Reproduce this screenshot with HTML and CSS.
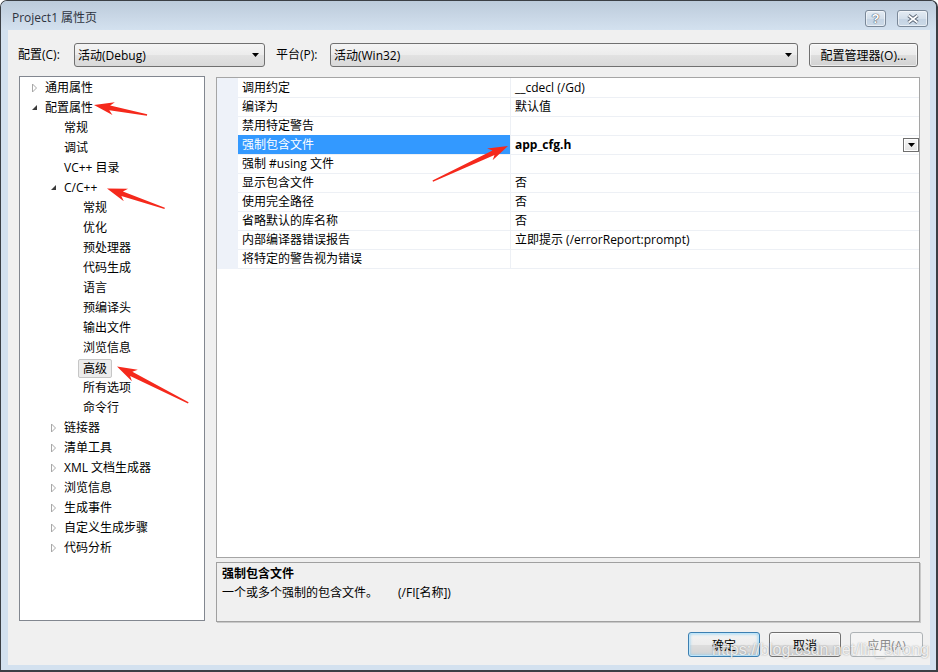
FILE: index.html
```
<!DOCTYPE html>
<html lang="zh-CN">
<head>
<meta charset="utf-8">
<title>Project1 属性页</title>
<link rel="stylesheet" href="styles.css">
</head>
<body>
<div class="window">
  <div class="titlebar">
    <span class="title">Project1 属性页</span>
    <div class="caption-btns">
      <div class="cbtn help"><span>?</span></div>
      <div class="cbtn close">
        <svg width="12" height="10" viewBox="0 0 12 10"><path d="M1.5 1.5 L10.5 8.5 M10.5 1.5 L1.5 8.5" stroke="#5d6979" stroke-width="3.6" fill="none"/><path d="M1.5 1.5 L10.5 8.5 M10.5 1.5 L1.5 8.5" stroke="#ffffff" stroke-width="1.6" fill="none"/></svg>
      </div>
    </div>
  </div>
  <div class="client">
    <div class="config-row">
      <span class="lbl l1">配置(C):</span>
      <div class="combo c1"><span>活动(Debug)</span><svg class="carrow" width="7" height="4" viewBox="0 0 7 4"><path d="M0 0 H7 L3.5 4 Z" fill="#000"/></svg></div>
      <span class="lbl l2">平台(P):</span>
      <div class="combo c2"><span>活动(Win32)</span><svg class="carrow" width="7" height="4" viewBox="0 0 7 4"><path d="M0 0 H7 L3.5 4 Z" fill="#000"/></svg></div>
      <div class="btn mgr">配置管理器(O)...</div>
    </div>
    <div class="main">
      <div class="tree">
        <div class="ti l0"><span class="exp"><svg width="14" height="20"><path d="M1.5 6 L5.5 10 L1.5 14 Z" fill="none" stroke="#a8a8a8"/></svg></span><span>通用属性</span></div>
        <div class="ti l0"><span class="exp"><svg width="14" height="20"><path d="M6 7 L6 12 L1 12 Z" fill="#3a3a3a"/></svg></span><span>配置属性</span></div>
        <div class="ti l1"><span class="exp"></span><span>常规</span></div>
        <div class="ti l1"><span class="exp"></span><span>调试</span></div>
        <div class="ti l1"><span class="exp"></span><span>VC++ 目录</span></div>
        <div class="ti l1"><span class="exp"><svg width="14" height="20"><path d="M6 7 L6 12 L1 12 Z" fill="#3a3a3a"/></svg></span><span>C/C++</span></div>
        <div class="ti l2"><span class="exp"></span><span>常规</span></div>
        <div class="ti l2"><span class="exp"></span><span>优化</span></div>
        <div class="ti l2"><span class="exp"></span><span>预处理器</span></div>
        <div class="ti l2"><span class="exp"></span><span>代码生成</span></div>
        <div class="ti l2"><span class="exp"></span><span>语言</span></div>
        <div class="ti l2"><span class="exp"></span><span>预编译头</span></div>
        <div class="ti l2"><span class="exp"></span><span>输出文件</span></div>
        <div class="ti l2"><span class="exp"></span><span>浏览信息</span></div>
        <div class="ti l2"><span class="exp"></span><span class="sel">高级</span></div>
        <div class="ti l2"><span class="exp"></span><span>所有选项</span></div>
        <div class="ti l2"><span class="exp"></span><span>命令行</span></div>
        <div class="ti l1"><span class="exp"><svg width="14" height="20"><path d="M1.5 6 L5.5 10 L1.5 14 Z" fill="none" stroke="#a8a8a8"/></svg></span><span>链接器</span></div>
        <div class="ti l1"><span class="exp"><svg width="14" height="20"><path d="M1.5 6 L5.5 10 L1.5 14 Z" fill="none" stroke="#a8a8a8"/></svg></span><span>清单工具</span></div>
        <div class="ti l1"><span class="exp"><svg width="14" height="20"><path d="M1.5 6 L5.5 10 L1.5 14 Z" fill="none" stroke="#a8a8a8"/></svg></span><span>XML 文档生成器</span></div>
        <div class="ti l1"><span class="exp"><svg width="14" height="20"><path d="M1.5 6 L5.5 10 L1.5 14 Z" fill="none" stroke="#a8a8a8"/></svg></span><span>浏览信息</span></div>
        <div class="ti l1"><span class="exp"><svg width="14" height="20"><path d="M1.5 6 L5.5 10 L1.5 14 Z" fill="none" stroke="#a8a8a8"/></svg></span><span>生成事件</span></div>
        <div class="ti l1"><span class="exp"><svg width="14" height="20"><path d="M1.5 6 L5.5 10 L1.5 14 Z" fill="none" stroke="#a8a8a8"/></svg></span><span>自定义生成步骤</span></div>
        <div class="ti l1"><span class="exp"><svg width="14" height="20"><path d="M1.5 6 L5.5 10 L1.5 14 Z" fill="none" stroke="#a8a8a8"/></svg></span><span>代码分析</span></div>
      </div>
      <div class="right">
        <div class="grid">
          <div class="row"><div class="strip"></div><div class="name">调用约定</div><div class="val">__cdecl (/Gd)</div></div>
          <div class="row"><div class="strip"></div><div class="name">编译为</div><div class="val">默认值</div></div>
          <div class="row"><div class="strip"></div><div class="name">禁用特定警告</div><div class="val"></div></div>
          <div class="row selected"><div class="strip"></div><div class="name">强制包含文件</div><div class="val"><b>app_cfg.h</b><span class="ddbtn"><svg width="7" height="4" viewBox="0 0 7 4"><path d="M0 0 H7 L3.5 4 Z" fill="#000"/></svg></span></div></div>
          <div class="row"><div class="strip"></div><div class="name">强制 #using 文件</div><div class="val"></div></div>
          <div class="row"><div class="strip"></div><div class="name">显示包含文件</div><div class="val">否</div></div>
          <div class="row"><div class="strip"></div><div class="name">使用完全路径</div><div class="val">否</div></div>
          <div class="row"><div class="strip"></div><div class="name">省略默认的库名称</div><div class="val">否</div></div>
          <div class="row"><div class="strip"></div><div class="name">内部编译器错误报告</div><div class="val">立即提示 (/errorReport:prompt)</div></div>
          <div class="row"><div class="strip"></div><div class="name">将特定的警告视为错误</div><div class="val"></div></div>
        </div>
        <div class="desc">
          <div class="desc-title">强制包含文件</div>
          <div class="desc-text">一个或多个强制的包含文件。<span class="opt">(/FI[名称])</span></div>
        </div>
      </div>
    </div>
    <div class="buttons">
      <div class="btn ok">确定</div>
      <div class="btn cancel">取消</div>
      <div class="btn apply disabled">应用(A)</div>
    </div>
  </div>
  <svg class="arrows" width="938" height="672" viewBox="0 0 938 672">
    <g fill="#f5291c">
      <polygon transform="translate(94 105) rotate(10.7)" points="0,0 20,-6.5 16,-2.4 54,-0.7 54,0.7 16,2.4 20,6.5"/>
      <polygon transform="translate(107 188.5) rotate(19)" points="0,0 20,-6.5 16,-2.4 61,-0.7 61,0.7 16,2.4 20,6.5"/>
      <polygon transform="translate(117 366.5) rotate(27)" points="0,0 20,-6.5 16,-2.4 80,-0.7 80,0.7 16,2.4 20,6.5"/>
      <polygon transform="translate(508 146) rotate(155)" points="0,0 20,-6.5 16,-2.4 83,-0.7 83,0.7 16,2.4 20,6.5"/>
    </g>
  </svg>
  <div class="watermark">https://blog.csdn.net/lin_strong</div>
</div>
</body>
</html>
```
FILE: styles.css
```
* { box-sizing: border-box; }
html, body { margin: 0; padding: 0; }
body {
  width: 938px;
  height: 672px;
  overflow: hidden;
  background: #ffffff;
  font-family: "Open Sans", "Noto Sans CJK SC", sans-serif;
  font-size: 12px;
  color: #000;
}

.window {
  position: relative;
  width: 938px;
  height: 672px;
  display: flex;
  flex-direction: column;
  background: #d3e1ef;
  border: 1px solid #3b3f45;
  border-right-width: 2px;
  border-bottom-width: 2px;
  border-radius: 7px 7px 0 0;
  overflow: hidden;
}

.titlebar {
  flex: none;
  height: 29px;
  display: flex;
  align-items: flex-start;
  padding-left: 11px;
  background: linear-gradient(#bccbdb, #c9d7e6 55%, #d3e1ef);
}
.title {
  margin-top: 9px;
  line-height: 16px;
  font-size: 12px;
  color: #2e3440;
}
.caption-btns {
  margin-left: auto;
  margin-right: 8px;
  margin-top: 9px;
  display: flex;
  gap: 11px;
}
.cbtn {
  height: 17px;
  border: 1px solid #7a8898;
  border-radius: 3px;
  background: linear-gradient(#e4ecf4, #d3dfeb 50%, #c4d3e3 51%, #ccdae8);
  box-shadow: inset 0 0 0 1px rgba(255,255,255,0.55);
  display: flex;
  align-items: center;
  justify-content: center;
}
.cbtn.help { width: 21px; }
.cbtn.close { width: 31px; }
.cbtn.help span {
  font-family: "Liberation Sans", sans-serif;
  font-weight: bold;
  font-size: 13px;
  line-height: 15px;
  color: #ffffff;
  text-shadow: 0 0 1px #4f5b6a, 0 0 1px #4f5b6a, 0 0 1px #4f5b6a;
}

.client {
  flex: 1;
  margin: 0 6px 5px 7px;
  background: #f0f0f0;
  display: flex;
  flex-direction: column;
}

.config-row {
  margin-top: 13px;
  height: 24px;
  display: flex;
  align-items: center;
  padding-left: 10px;
}
.lbl { line-height: 24px; }
.lbl.l1 { width: 56px; }
.lbl.l2 { width: 54px; margin-left: 11px; }
.combo {
  height: 24px;
  border: 1px solid #707070;
  border-radius: 3px;
  background: linear-gradient(#f4f4f4, #ececec 50%, #e2e2e2 51%, #d9d9d9);
  display: flex;
  align-items: center;
  justify-content: space-between;
  padding: 0 5px 0 3px;
}
.combo.c1 { width: 191px; }
.combo.c2 { width: 468px; }
.carrow { display: block; }

.btn {
  height: 25px;
  border: 1px solid #707070;
  border-radius: 3px;
  background: linear-gradient(#f4f4f4, #ececec 50%, #dedede 51%, #d2d2d2);
  box-shadow: inset 0 0 0 1px rgba(255,255,255,0.6);
  display: flex;
  align-items: center;
  justify-content: center;
}
.btn.mgr { width: 109px; height: 24px; margin-left: 11px; }

.main {
  margin-top: 9px;
  height: 546px;
  display: flex;
  gap: 11px;
  padding-left: 11px;
}
.tree {
  width: 186px;
  height: 545px;
  background: #fff;
  border: 1px solid #828790;
  padding-top: 1px;
}
.ti {
  height: 20px;
  line-height: 20px;
  display: flex;
  align-items: center;
  white-space: nowrap;
}
.ti.l0 { padding-left: 11px; }
.ti.l1 { padding-left: 30px; }
.ti.l2 { padding-left: 49px; }
.exp { width: 14px; height: 20px; flex: none; display: block; }
.exp svg { display: block; }
.sel {
  margin-left: -5px;
  padding: 0 4px;
  height: 19px;
  line-height: 17px;
  border: 1px solid #c6c6c6;
  border-radius: 2px;
  background: #ececec;
}

.right {
  width: 704px;
  display: flex;
  flex-direction: column;
  gap: 4px;
  padding-top: 1px;
}
.grid {
  height: 481px;
  background: #fff;
  border: 1px solid #a5a5a5;
}
.row {
  display: grid;
  grid-template-columns: 21px 273px 1fr;
  height: 19px;
}
.strip { background: #eef2f9; }
.name, .val {
  border-bottom: 1px solid #edf0f5;
  line-height: 18px;
  padding-top: 1px;
  padding-left: 4px;
  white-space: nowrap;
}
.name { border-right: 1px solid #edf0f5; }
.val { display: flex; }
.row.selected .name { background: #3399ff; color: #fff; }
.ddbtn {
  margin-left: auto;
  margin-top: 2px;
  width: 16px;
  height: 14px;
  border: 1px solid #6f6f6f;
  background: linear-gradient(#f6f6f6, #e2e2e2);
  box-shadow: inset 0 0 0 1px #fff;
  display: flex;
  align-items: center;
  justify-content: center;
}
.ddbtn svg { display: block; }

.desc {
  height: 60px;
  background: #f0f0f0;
  border: 1px solid #a0a0a0;
  box-shadow: 1px 1px 0 #c9c9c9;
  padding: 1px 5px;
  line-height: 19px;
}
.desc-title { font-weight: bold; }
.opt { margin-left: 20px; }

.buttons {
  margin-top: 10px;
  display: flex;
  justify-content: flex-end;
  gap: 9px;
  padding-right: 7px;
}
.btn.ok, .btn.cancel { width: 72px; }
.btn.apply { width: 73px; }
.btn.ok {
  border-color: #3c7fb1;
  box-shadow: inset 0 0 0 1px #bfe6fa, inset 0 0 3px 1px #8fd0f2;
}
.btn.disabled {
  border-color: #adb2b5;
  background: #f4f4f4;
  box-shadow: none;
  color: #8a8a8a;
}

.arrows {
  position: absolute;
  left: -1px;
  top: -1px;
  pointer-events: none;
}
.watermark {
  position: absolute;
  left: 711px;
  top: 640px;
  font-family: "Liberation Sans", sans-serif;
  font-size: 16px;
  line-height: 18px;
  color: rgba(255,255,255,0.82);
  text-shadow: 0 0 1.5px rgba(70,70,70,0.55);
  white-space: nowrap;
  pointer-events: none;
}
```
